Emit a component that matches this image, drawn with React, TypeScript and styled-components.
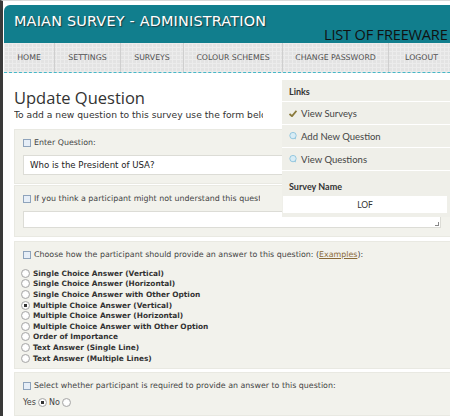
import React from 'react';
import styled, { createGlobalStyle } from 'styled-components';

const GlobalStyle = createGlobalStyle`
  html, body {
    margin: 0;
    padding: 0;
    background: #ffffff;
    overflow: hidden;
  }
`;

const Frame = styled.div`
  position: relative;
  width: 540px;
  height: 416px;
  border-left: 3px solid #3a3a3a;
  border-top: 1px solid #d8d8d8;
  background: #ffffff;
  box-sizing: border-box;
  padding: 4px 0 0 1px;
  font-family: 'DejaVu Sans', Verdana, sans-serif;
`;

const Header = styled.div`
  position: relative;
  height: 38px;
  background: #117e8d;
  border-top-left-radius: 6px;
  padding-left: 10px;
  display: flex;
  align-items: center;
`;

const Title = styled.h1`
  margin: 0;
  font-family: 'DejaVu Sans', Verdana, sans-serif;
  font-weight: normal;
  font-size: 14.4px;
  letter-spacing: 0.2px;
  color: #ffffff;
  text-shadow: 1px 1px 1px #1f3a40;
  margin-top: -6px;
`;

const Watermark = styled.div`
  position: absolute;
  left: 320px;
  bottom: 1px;
  font-family: 'Open Sans', sans-serif;
  font-size: 14.6px;
  letter-spacing: -0.2px;
  color: #111111;
  line-height: 16px;
`;

const Nav = styled.nav`
  display: flex;
  height: 29px;
  background-color: #e3e3e3;
  background-image: linear-gradient(#ececec 1px, transparent 1px),
    linear-gradient(90deg, #ececec 1px, transparent 1px);
  background-size: 4px 4px;
  border-bottom: 1px dashed #45b8c8;
`;

const NavItem = styled.a<{ w: number }>`
  width: ${(p) => p.w}px;
  flex: none;
  display: flex;
  align-items: center;
  justify-content: center;
  border-right: 1px solid #cfcfcf;
  font-size: 7.8px;
  color: #505050;
  box-sizing: border-box;
`;

const Body = styled.div`
  position: relative;
  padding: 14px 0 0 10px;
`;

const Heading = styled.h2`
  margin: 0;
  font-family: 'Open Sans', sans-serif;
  font-weight: normal;
  font-size: 16.5px;
  color: #333333;
  line-height: 22px;
`;

const Clip = styled.span<{ w: number }>`
  display: inline-block;
  width: ${(p) => p.w}px;
  overflow: hidden;
  white-space: nowrap;
  vertical-align: top;
`;

const Intro = styled.p`
  margin: 0 0 8px;
  font-size: 9.2px;
  color: #333333;
  line-height: 12px;
  white-space: nowrap;
`;

const Panel = styled.div<{ gap?: number; pb?: number }>`
  background: #f2f2ec;
  border: 1px solid #e9e9e2;
  padding: 7px 8px ${(p) => p.pb ?? 8}px;
  margin-bottom: ${(p) => p.gap ?? 1}px;
`;

const Label = styled.div`
  display: flex;
  align-items: center;
  gap: 3px;
  font-size: 7.9px;
  color: #444444;
  line-height: 12px;
  white-space: nowrap;
`;

const NoteIcon = styled.span`
  width: 6px;
  height: 6px;
  border: 1px solid #8ea3bb;
  background: #e6eef7;
  flex: none;
`;

const TextBox = styled.div<{ h: number }>`
  margin-top: 6px;
  height: ${(p) => p.h}px;
  width: 418px;
  background: #ffffff;
  border: 1px solid #dcdcd6;
  box-sizing: border-box;
  font-size: 8.6px;
  color: #222222;
  padding-left: 6px;
  display: flex;
  align-items: center;
  position: relative;
`;

const Grip = styled.span`
  position: absolute;
  right: 1px;
  bottom: 1px;
  width: 3px;
  height: 3px;
  border-right: 1px solid #888;
  border-bottom: 1px solid #888;
`;

const ExampleLink = styled.a`
  color: #8a6a38;
  text-decoration: underline;
`;

const Options = styled.div`
  margin: 7px 0 0 -2px;
  display: flex;
  flex-direction: column;
`;

const Option = styled.label`
  display: flex;
  align-items: center;
  gap: 3px;
  height: 10.6px;
  font-size: 7.4px;
  font-weight: bold;
  color: #333333;
  white-space: nowrap;
`;

const Radio = styled.span<{ on?: boolean }>`
  width: 7px;
  height: 7px;
  border-radius: 50%;
  border: 1px solid #a8a8a8;
  background: radial-gradient(circle, ${(p) => (p.on ? '#333 0 1.6px,' : '')} #ffffff 2px, #e6e6e6 100%);
  flex: none;
`;

const YesNo = styled.div`
  margin-top: 6px;
  display: flex;
  align-items: center;
  gap: 2px;
  font-size: 8px;
  color: #444444;
`;

const Sidebar = styled.aside`
  position: absolute;
  left: 278px;
  top: 7px;
  width: 168px;
  background: #efefe9;
  font-family: Lato, 'Open Sans', sans-serif;
  padding-bottom: 4px;
`;

const SideTitle = styled.div<{ h: number; line?: boolean }>`
  font-weight: bold;
  font-size: 9px;
  color: #333333;
  padding: 0 7px 4px;
  height: ${(p) => p.h}px;
  display: flex;
  align-items: flex-end;
  border-top: ${(p) => (p.line ? '1px solid #ffffff' : 'none')};
  box-sizing: border-box;
`;

const SideLink = styled.a`
  display: flex;
  align-items: center;
  gap: 4px;
  height: 23px;
  padding: 0 7px;
  border-top: 1px solid #ffffff;
  font-size: 9.5px;
  color: #444444;
  box-sizing: border-box;
`;

const NameBox = styled.div`
  margin: 0 3px 0 1px;
  height: 17px;
  background: #ffffff;
  display: flex;
  align-items: center;
  justify-content: center;
  font-size: 8.5px;
  color: #333333;
`;

const Check = () => (
  <svg width="8" height="7" viewBox="0 0 8 7">
    <path d="M0.5 4 L3 6.2 L7.5 0.8" stroke="#8a7a3c" strokeWidth="1.8" fill="none" />
  </svg>
);

const Bubble = () => (
  <svg width="8" height="8" viewBox="0 0 8 8">
    <circle cx="4" cy="3.6" r="3.2" fill="#d8ecf5" stroke="#8cc3dc" strokeWidth="0.9" />
    <path d="M5 6.2 L7 7.6 L6.4 5.4 Z" fill="#8cc3dc" />
  </svg>
);

const navItems: [string, number][] = [
  ['HOME', 51],
  ['SETTINGS', 66],
  ['SURVEYS', 63],
  ['COLOUR SCHEMES', 99],
  ['CHANGE PASSWORD', 106],
  ['LOGOUT', 66],
];

const answerTypes = [
  'Single Choice Answer (Vertical)',
  'Single Choice Answer (Horizontal)',
  'Single Choice Answer with Other Option',
  'Multiple Choice Answer (Vertical)',
  'Multiple Choice Answer (Horizontal)',
  'Multiple Choice Answer with Other Option',
  'Order of Importance',
  'Text Answer (Single Line)',
  'Text Answer (Multiple Lines)',
];

export default function App() {
  return (
    <Frame>
      <GlobalStyle />
      <Header>
        <Title>MAIAN SURVEY - ADMINISTRATION</Title>
        <Watermark>LIST OF FREEWARE</Watermark>
      </Header>
      <Nav>
        {navItems.map(([label, w]) => (
          <NavItem key={label} w={w}>
            {label}
          </NavItem>
        ))}
      </Nav>
      <Body>
        <Heading>Update Question</Heading>
        <Intro>
          <Clip w={249}>To add a new question to this survey use the form below</Clip>
        </Intro>

        <Panel>
          <Label>
            <NoteIcon />
            Enter Question:
          </Label>
          <TextBox h={20}>Who is the President of USA?</TextBox>
        </Panel>

        <Panel gap={4}>
          <Label>
            <NoteIcon />
            <Clip w={226}>
              If you think a participant might not understand this question, enter some help text
            </Clip>
          </Label>
          <TextBox h={17}>
            <Grip />
          </TextBox>
        </Panel>

        <Panel gap={3} pb={5}>
          <Label>
            <NoteIcon />
            <span>
              Choose how the participant should provide an answer to this question: (
              <ExampleLink>Examples</ExampleLink>):
            </span>
          </Label>
          <Options>
            {answerTypes.map((t, i) => (
              <Option key={t}>
                <Radio on={i === 3} />
                {t}
              </Option>
            ))}
          </Options>
        </Panel>

        <Panel>
          <Label>
            <NoteIcon />
            Select whether participant is required to provide an answer to this question:
          </Label>
          <YesNo>
            Yes <Radio on /> No <Radio />
          </YesNo>
        </Panel>

        <Sidebar>
          <SideTitle h={21}>Links</SideTitle>
          <SideLink>
            <Check />
            View Surveys
          </SideLink>
          <SideLink>
            <Bubble />
            Add New Question
          </SideLink>
          <SideLink>
            <Bubble />
            View Questions
          </SideLink>
          <SideTitle h={26} line>
            Survey Name
          </SideTitle>
          <NameBox>LOF</NameBox>
        </Sidebar>
      </Body>
    </Frame>
  );
}
